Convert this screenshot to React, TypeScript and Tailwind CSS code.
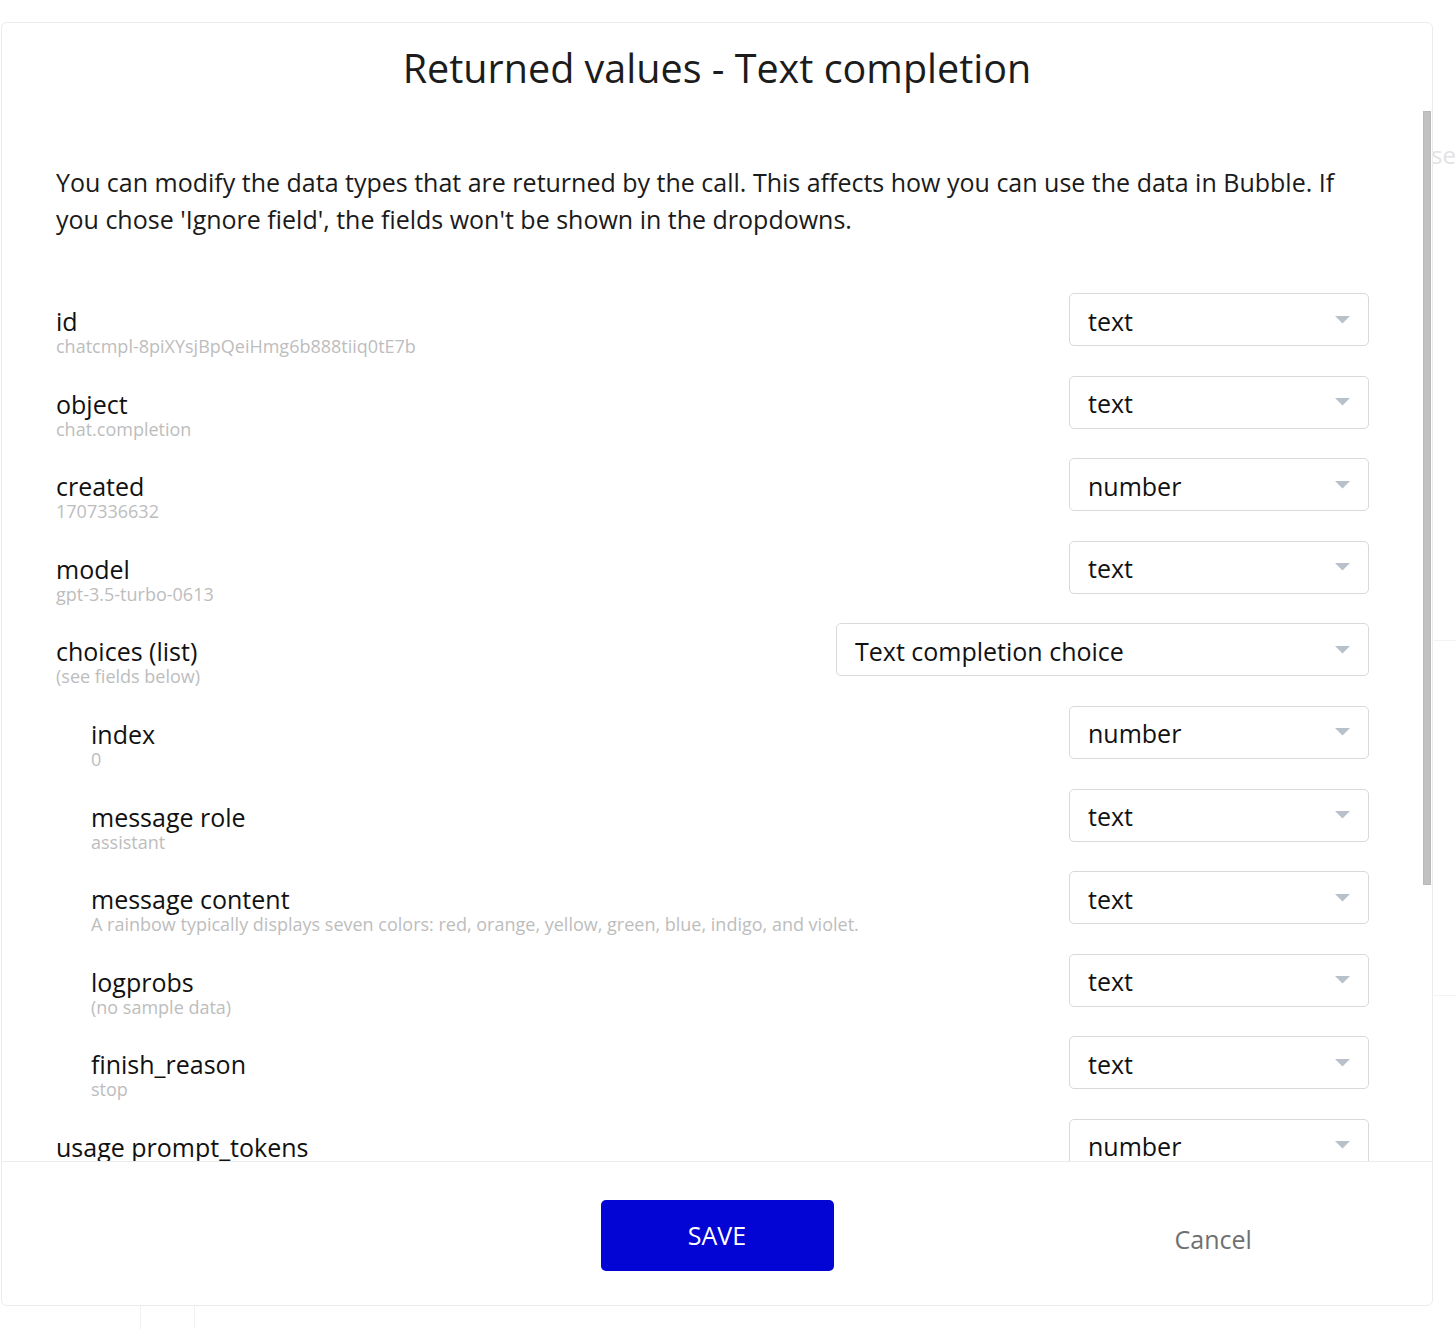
import React from "react";

type Row = { label: string; sub: string; value: string; indent?: boolean; wide?: boolean };

const rows: Row[] = [
  { label: "id", sub: "chatcmpl-8piXYsjBpQeiHmg6b888tiiq0tE7b", value: "text" },
  { label: "object", sub: "chat.completion", value: "text" },
  { label: "created", sub: "1707336632", value: "number" },
  { label: "model", sub: "gpt-3.5-turbo-0613", value: "text" },
  { label: "choices (list)", sub: "(see fields below)", value: "Text completion choice", wide: true },
  { label: "index", sub: "0", value: "number", indent: true },
  { label: "message role", sub: "assistant", value: "text", indent: true },
  {
    label: "message content",
    sub: "A rainbow typically displays seven colors: red, orange, yellow, green, blue, indigo, and violet.",
    value: "text",
    indent: true,
  },
  { label: "logprobs", sub: "(no sample data)", value: "text", indent: true },
  { label: "finish_reason", sub: "stop", value: "text", indent: true },
  { label: "usage prompt_tokens", sub: "", value: "number" },
];

function Caret() {
  return (
    <svg width="15" height="8" viewBox="0 0 15 8" className="shrink-0">
      <path d="M0 0 L15 0 L7.5 7.5 Z" fill="#b8c1ca" />
    </svg>
  );
}

function Dropdown({ value, wide }: { value: string; wide?: boolean }) {
  return (
    <div
      className={`${wide ? "w-[533px]" : "w-[300px]"} h-[53px] shrink-0 rounded-[5px] border border-[#d9d9d9] bg-white flex items-center justify-between pl-[18px] pr-[18px]`}
    >
      <span className="text-[25px] leading-[30px] text-[#111] pt-[2px]">{value}</span>
      <Caret />
    </div>
  );
}

export default function App() {
  return (
    <div
      className="relative w-[1456px] h-[1329px] bg-white overflow-hidden"
      style={{ fontFamily: '"Open Sans", "Noto Sans", sans-serif' }}
    >
      {/* faint page content behind the modal */}
      <div className="absolute left-[1431px] top-[140px] text-[24px] leading-[30px] text-[#e2e2e2]">se</div>
      <div className="absolute left-[1434px] top-[640px] w-[22px] h-[1px] bg-[#f3f3f3]" />
      <div className="absolute left-[1434px] top-[995px] w-[22px] h-[1px] bg-[#f3f3f3]" />

      <div className="absolute left-[1px] top-[22px] w-[1432px] h-[1284px] rounded-[6px] border border-[#ececec] bg-white flex flex-col overflow-hidden">
        {/* header */}
        <div className="h-[86px] shrink-0 pt-[19px] text-center">
          <h1 className="text-[39.5px] leading-[52px] text-[#1c1c1c] font-normal">
            Returned values - Text completion
          </h1>
        </div>

        {/* body */}
        <div className="relative flex-1 min-h-0 overflow-hidden">
          <div className="pl-[54px] pr-[63px] pt-[55px]">
            <p className="text-[25px] leading-[37px] text-[#1a1a1a] pr-[20px]">
              You can modify the data types that are returned by the call. This affects how you can use the data
              in Bubble. If you chose 'Ignore field', the fields won't be shown in the dropdowns.
            </p>
            <div className="mt-[55px] flex flex-col gap-[29.6px]">
              {rows.map((r) => (
                <div key={r.label} className="flex items-start justify-between h-[53px]">
                  <div className={`${r.indent ? "pl-[35px]" : ""} pt-[15px]`}>
                    <div className="text-[25px] leading-[26px] text-[#111]">{r.label}</div>
                    {r.sub && (
                      <div className="text-[18px] leading-[24px] text-[#bdbdbd] whitespace-nowrap">{r.sub}</div>
                    )}
                  </div>
                  <Dropdown value={r.value} wide={r.wide} />
                </div>
              ))}
            </div>
          </div>
          {/* scrollbar thumb */}
          <div className="absolute right-[1px] top-[2px] w-[8px] h-[774px] bg-[#c1c1c1] border border-[#b9b9b9]" />
        </div>

        {/* footer */}
        <div className="h-[144px] shrink-0 border-t border-[#ececec] grid grid-cols-[1fr_233px_1fr] items-center">
          <div />
          <button className="h-[71px] w-[233px] rounded-[5px] bg-[#0205d3] text-white text-[25px] leading-[30px] mt-[3px]">
            SAVE
          </button>
          <div className="pl-[341px] pt-[12px]">
            <span className="text-[25px] leading-[30px] text-[#707070]">Cancel</span>
          </div>
        </div>
      </div>

      {/* faint page content below the modal */}
      <div className="absolute left-[140px] top-[1306px] w-[55px] h-[23px] border-x border-[#f1f1f1]" />
    </div>
  );
}
